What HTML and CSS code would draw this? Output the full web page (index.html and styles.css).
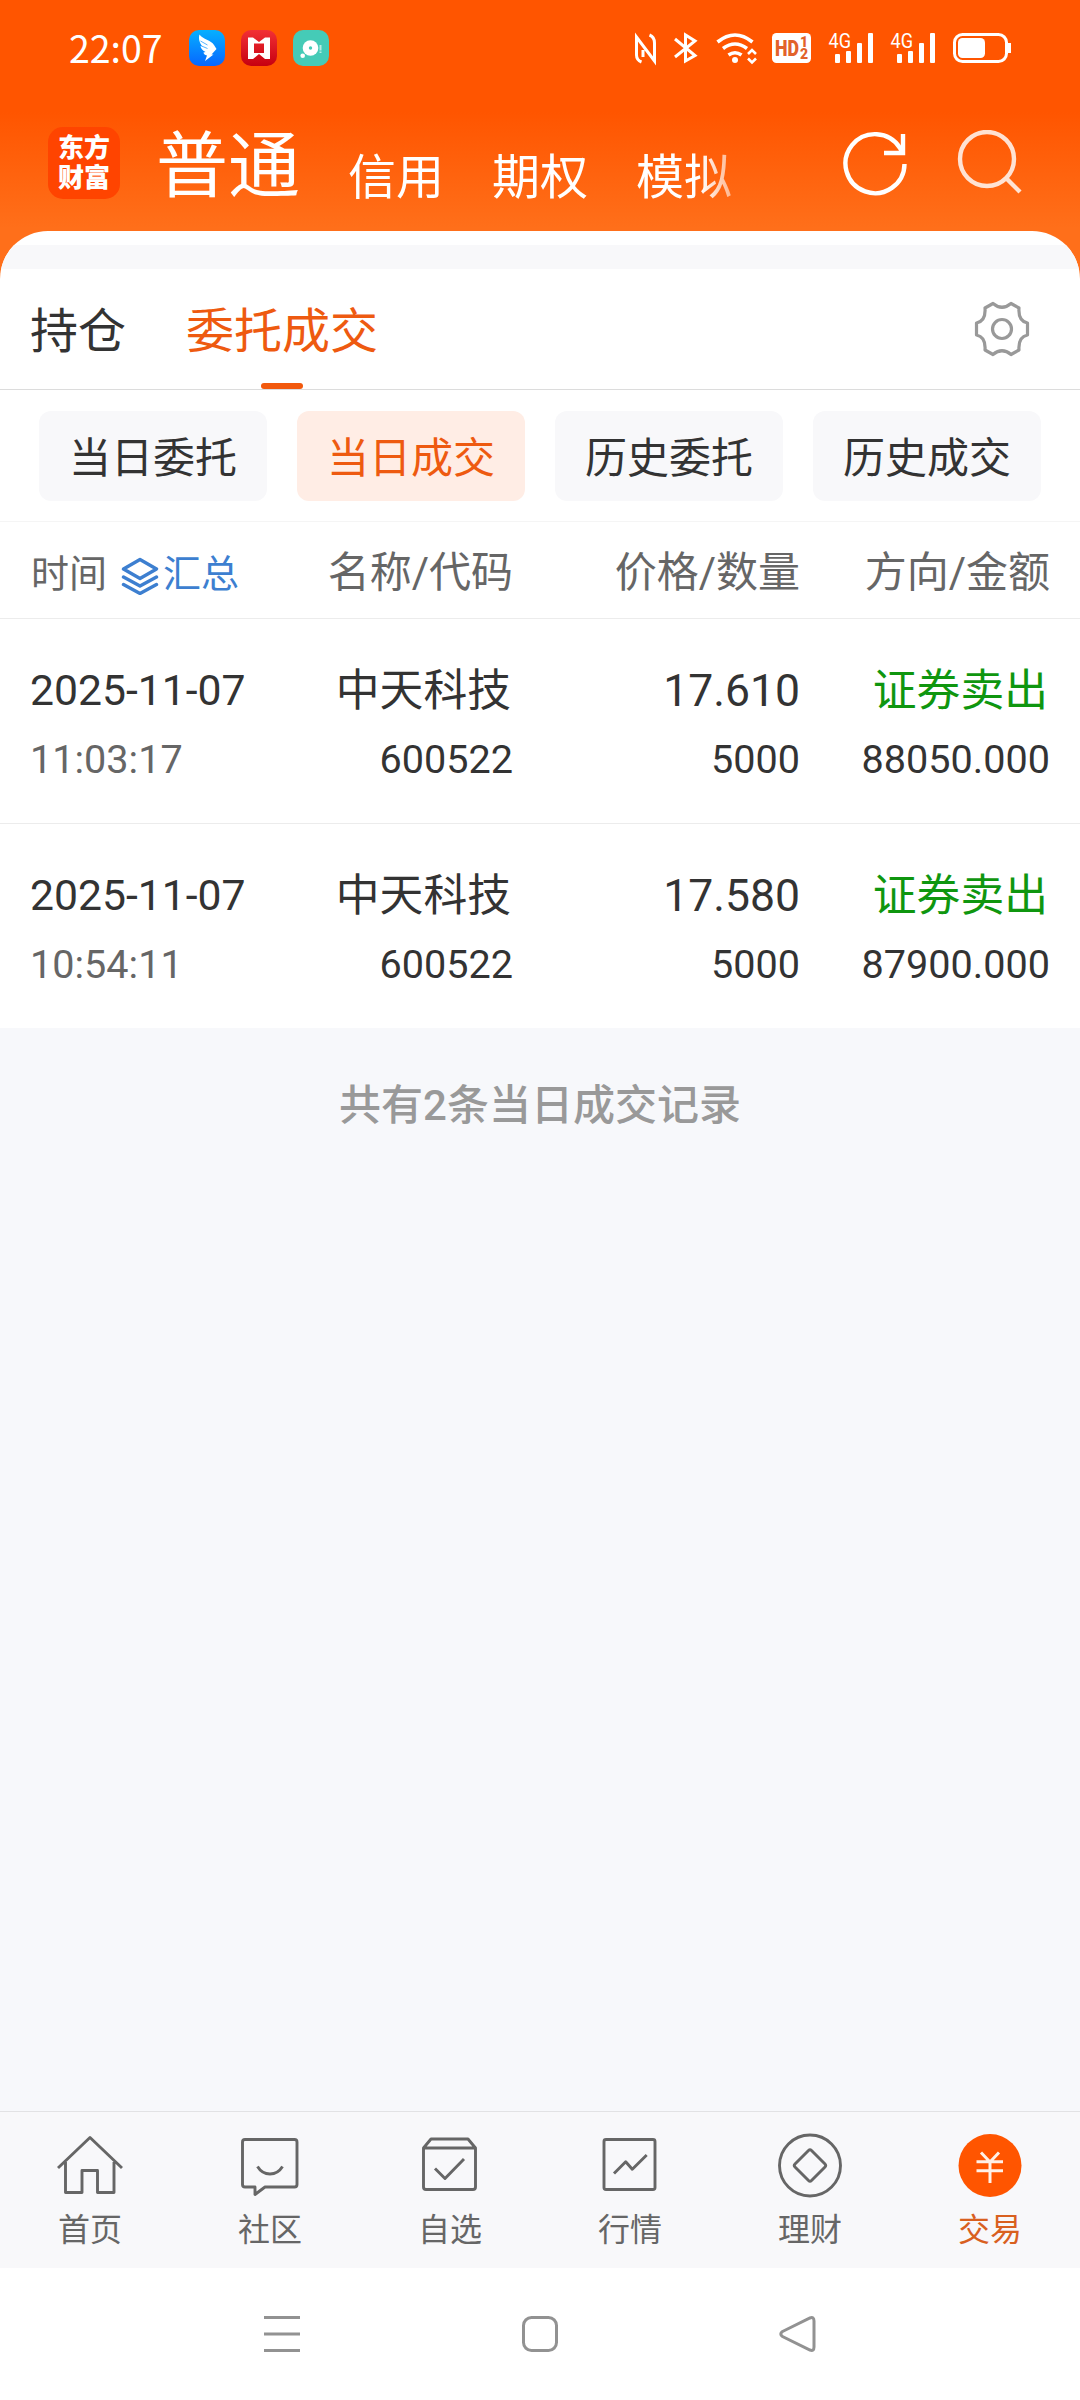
FILE: index.html
```html
<!DOCTYPE html>
<html lang="zh-CN">
<head>
    <meta charset="UTF-8">
    <meta name="viewport" content="width=device-width, initial-scale=1.0">
    <title>当日成交</title>
    <link rel="stylesheet" href="styles.css">
</head>
<body>
    <div class="top">
        <div class="status-bar">
            <span class="clock">22:07</span>
            <div class="notices">
                <svg width="36" height="36" viewBox="0 0 36 36">
                    <defs>
                        <linearGradient id="blue" x1="0" y1="0" x2="0" y2="1"><stop offset="0" stop-color="#06b0ff"/><stop offset="1" stop-color="#0766ff"/></linearGradient>
                        <linearGradient id="red" x1="0" y1="0" x2="0" y2="1"><stop offset="0" stop-color="#f23035"/><stop offset="1" stop-color="#c60010"/></linearGradient>
                    </defs>
                    <rect width="36" height="36" rx="10" fill="url(#blue)"/>
                    <path d="M10.500 4.500C14 9.500 22 10 25 15L27.500 19L22.500 24.500H24.500L16 31L18 25.500C15.500 25 14.500 23.500 14.500 22.500L16.500 22C13.500 20.500 11.500 18 11.500 16L13.500 16.500C10.500 13 9.200 8.500 10.500 4.500Z" fill="#fff"/>
                    <path d="M11.500 11l7 4M12.500 16l6 2.500" stroke="#0b92ff" stroke-width=".7"/>
                </svg>
                <svg width="36" height="36" viewBox="0 0 36 36">
                    <rect width="36" height="36" rx="10" fill="url(#red)"/>
                    <path d="M7 7.500h5l6 4.500 6-4.500h5v21.500h-5l-6-5-6 5H7zM13 13.500v9.500h10V13.500z" fill="#fff" fill-rule="evenodd"/>
                </svg>
                <svg width="36" height="36" viewBox="0 0 36 36">
                    <rect width="36" height="36" rx="10" fill="#45cbb7"/>
                    <circle cx="17.500" cy="18" r="7.800" fill="#fff"/>
                    <circle cx="17.500" cy="18" r="1.700" fill="#45cbb7"/>
                    <circle cx="9.700" cy="25.800" r="2.300" fill="#fff"/>
                    <path d="M27.500 15v5.500M27.500 21.500v1.500" stroke="#b9ece4" stroke-width="2"/>
                </svg>
            </div>
            <svg class="signals" width="380" height="36" viewBox="632 30 380 36" fill="none" stroke="#fff" stroke-width="3">
                <!-- nfc -->
                <path d="M641.500 62q-5-2-5-7V37L654.500 61V43q0-6-5-8M643 57V50"/>
                <!-- bluetooth -->
                <path d="M675 39L695 55.500L685.500 61V35L695 41L675 57"/>
                <!-- wifi -->
                <path d="M717.500 42q17.500-14 35 0M723 48.500q12-9 24 0M728.500 55q6.500-4.500 13 0" stroke-width="3.600"/>
                <circle cx="735" cy="60" r="3" fill="#fff" stroke="none"/>
                <path d="M748 54l4-4 4 4M748 58.500l4 4 4-4" stroke-width="2.600"/>
                <!-- hd -->
                <rect x="772" y="33" width="39" height="30" rx="4.500" fill="#fff" stroke="none"/>
                <g class="badge-text">
                    <text x="775" y="56" font-size="22" textLength="24" lengthAdjust="spacingAndGlyphs">HD</text>
                    <text x="800" y="47" font-size="14">1</text>
                    <text x="800" y="59" font-size="14">2</text>
                </g>
                <!-- mobile signal -->
                <g id="bars" fill="#fff" stroke="none">
                    <text x="828.500" y="48" class="net" textLength="22.500" lengthAdjust="spacingAndGlyphs">4G</text>
                    <rect x="835" y="54" width="5" height="9" rx="1"/>
                    <rect x="846" y="51" width="5" height="12" rx="1"/>
                    <rect x="857" y="43" width="5" height="20" rx="1"/>
                    <rect x="868" y="33" width="5" height="30" rx="1"/>
                </g>
                <use href="#bars" x="62"/>
                <!-- battery -->
                <rect x="954.500" y="34.500" width="52" height="27" rx="8"/>
                <rect x="958" y="38" width="27" height="20" rx="4.500" fill="#fff" stroke="none"/>
                <path d="M1009.500 43v10" stroke-width="3"/>
            </svg>
        </div>
        <div class="app-bar">
            <div class="logo">东方<br>财富</div>
            <div class="accounts">
                <span class="current">普通</span>
                <span>信用</span>
                <span>期权</span>
                <span>模拟</span>
            </div>
            <div class="actions">
                <svg width="66" height="66" viewBox="1 0 66 66" fill="none" stroke="#fff" stroke-width="4.400">
                    <path d="M62.500 34A29.500 29.500 0 1 1 58 18L60 22"/>
                    <path d="M61 4v19H42"/>
                </svg>
                <svg class="search" width="66" height="66" viewBox="1 0 66 66" fill="none" stroke="#fff" stroke-width="4.400">
                    <circle cx="31" cy="29" r="27"/>
                    <path d="M50 48l14 14"/>
                </svg>
            </div>
        </div>
    </div>

    <div class="panel">
        <div class="strip"></div>
        <div class="tabs">
            <span>持仓</span>
            <span class="active">委托成交</span>
            <svg class="gear" width="56" height="56" viewBox="-28 -28 56 56" fill="none" stroke="#999" stroke-width="3.200" stroke-linejoin="round">
                <path d="M-9-25.500Q0-18 9-25.500L17-21Q16-8 25.500-6V6Q16 8 17 21L9 25.500Q0 18-9 25.500L-17 21Q-16 8-25.500 6V-6Q-16-8-17-21Z"/>
                <circle r="9.500"/>
            </svg>
        </div>
        <div class="chips">
            <div class="chip">当日委托</div>
            <div class="chip selected">当日成交</div>
            <div class="chip">历史委托</div>
            <div class="chip">历史成交</div>
        </div>
        <div class="row head">
            <div class="time-head">
                时间
                <svg width="38" height="38" viewBox="0 0 38 38" fill="none" stroke="#3d7fd0" stroke-width="3.400" stroke-linejoin="round" stroke-linecap="round">
                    <path d="M19 2.500L35.500 12L19 21.500L2.500 12ZM2.500 20L19 29L35.500 20M2.500 27.500L19 36.500L35.500 27.500"/>
                </svg>
                <span>汇总</span>
            </div>
            <div>名称/代码</div>
            <div>价格/数量</div>
            <div>方向/金额</div>
        </div>
        <div class="row deal">
            <div><p class="date">2025-11-07</p><p class="time">11:03:17</p></div>
            <div><p class="name">中天科技</p><p>600522</p></div>
            <div><p class="price">17.610</p><p>5000</p></div>
            <div><p class="name sell">证券卖出</p><p>88050.000</p></div>
        </div>
        <div class="row deal">
            <div><p class="date">2025-11-07</p><p class="time">10:54:11</p></div>
            <div><p class="name">中天科技</p><p>600522</p></div>
            <div><p class="price">17.580</p><p>5000</p></div>
            <div><p class="name sell">证券卖出</p><p>87900.000</p></div>
        </div>
    </div>

    <div class="summary">共有2条当日成交记录</div>

    <div class="tab-bar">
        <div class="tab">
            <svg viewBox="0 0 66 66"><path d="M1 36L33 5.500L65 36M8.500 30V60.500H25V38.500H40.500V60.500H57V30"/></svg>
            首页
        </div>
        <div class="tab">
            <svg viewBox="0 0 66 66"><path d="M8 7.500H57.500Q60 7.500 60 10V52.500Q60 55 57.500 55H28L18 62.500V55H8Q5.500 55 5.500 52.500V10Q5.500 7.500 8 7.500ZM20.500 34.500Q25 42 33 42T45.500 34.500"/></svg>
            社区
        </div>
        <div class="tab">
            <svg viewBox="0 0 66 66"><path d="M6.500 16L14 7H51L58.500 16V55Q58.500 57.500 56 57.500H9Q6.500 57.500 6.500 55ZM6.500 16H58.500M18 36.500L28 46.500L47 27"/></svg>
            自选
        </div>
        <div class="tab">
            <svg viewBox="0 0 66 66"><rect x="7" y="7.500" width="51" height="50" rx="2"/><path d="M17 41.500L28.700 29.700L35.300 37.200L49.700 23"/></svg>
            行情
        </div>
        <div class="tab">
            <svg viewBox="0 0 66 66"><circle cx="33" cy="33.500" r="30.500"/><path d="M31.500 18.500Q33 17 34.500 18.500L48 32Q49.500 33.500 48 35L34.500 48.500Q33 50 31.500 48.500L18 35Q16.500 33.500 18 32Z"/></svg>
            理财
        </div>
        <div class="tab on">
            <svg viewBox="0 0 66 66"><circle class="disc" cx="33" cy="33.500" r="31.500"/><path class="yuan" d="M24 20.500L33 30L42 20.500M33 30V51M19.500 29.700H46M19.500 38.700H46"/></svg>
            交易
        </div>
    </div>

    <div class="nav-bar">
        <svg viewBox="0 0 38 38"><path d="M1 2.500H37M1 19H37M1 35.500H37"/></svg>
        <svg viewBox="0 0 38 38"><rect x="2.500" y="2.500" width="33" height="33" rx="8"/></svg>
        <svg viewBox="0 0 38 38"><path d="M3.500 16.500L31 3Q35 1.500 35 6V32Q35 36.500 31 35L3.500 21.500Q0 19 3.500 16.500Z"/></svg>
    </div>
</body>
</html>
```

FILE: styles.css
```css
* {
    margin: 0;
    padding: 0;
    box-sizing: border-box;
}

body {
    width: 1080px;
    height: 2400px;
    display: flex;
    flex-direction: column;
    background: #f7f8fb;
    color: #333;
    font-family: Roboto, "Noto Sans CJK SC", sans-serif;
}

svg {
    display: block;
    flex-shrink: 0;
}

/* header */
.top {
    height: 291px;
    flex-shrink: 0;
    background: linear-gradient(#ff5500 112px, #ff6f1a 228px);
    color: #fff;
}

.status-bar {
    height: 96px;
    padding: 0 68px 0 69px;
    display: flex;
    align-items: center;
}

.clock {
    width: 120px;
    font-family: "Noto Sans CJK SC", sans-serif;
    font-size: 37.5px;
    line-height: 48px;
    padding-bottom: 3px;
}

.notices {
    display: flex;
    gap: 16px;
}

.signals {
    margin-left: auto;
}

.badge-text {
    fill: #e2622a;
    stroke: none;
    font-weight: 900;
}

.net {
    font-size: 20px;
}

.app-bar {
    height: 135px;
    padding: 0 57px 0 48px;
    display: flex;
    align-items: center;
}

.logo {
    width: 72px;
    height: 72px;
    padding-top: 6px;
    border-radius: 15px;
    background: #ff4400;
    font-size: 26px;
    line-height: 30px;
    font-weight: 900;
    text-align: center;
    margin-bottom: 1px;
}

.accounts {
    margin-left: 36px;
    display: flex;
    align-items: flex-end;
    gap: 48px;
    font-size: 48px;
    line-height: 68px;
    padding-top: 6px;
    -webkit-mask-image: linear-gradient(to right, #000 544px, rgba(0, 0, 0, 0.45) 580px);
    mask-image: linear-gradient(to right, #000 544px, rgba(0, 0, 0, 0.45) 580px);
}

.accounts .current {
    font-size: 72px;
    line-height: 90px;
}

.actions {
    margin-left: auto;
    margin-bottom: 2px;
    display: flex;
    gap: 48px;
}

.search {
    opacity: 0.82;
}

/* content panel */
.panel {
    margin-top: -60px;
    padding-top: 14px;
    border-radius: 48px 48px 0 0;
    overflow: hidden;
    flex-shrink: 0;
    background: #fff;
}

.strip {
    height: 24px;
    background: #f8f8fa;
}

.tabs {
    height: 121px;
    padding: 0 50px 0 30px;
    display: flex;
    align-items: center;
    gap: 60px;
    border-bottom: 1px solid #dcdcdc;
    font-size: 48px;
}

.tabs span {
    height: 120px;
    line-height: 126px;
}

.tabs .active {
    position: relative;
    color: #ee5a10;
}

.tabs .active::after {
    content: '';
    position: absolute;
    left: 75px;
    bottom: 0;
    width: 42px;
    height: 6px;
    border-radius: 3px;
    background: #f2590d;
}

.gear {
    margin-left: auto;
}

.chips {
    height: 132px;
    padding: 21px 39px 0;
    display: flex;
    gap: 30px;
    border-bottom: 1px solid #f5f5f5;
}

.chip {
    flex: 1;
    height: 90px;
    border-radius: 12px;
    background: #f8f8fa;
    font-size: 42px;
    line-height: 95px;
    text-align: center;
}

.chip.selected {
    background: #ffede5;
    color: #ee5a10;
}

/* deals table */
.row {
    padding: 0 30px;
    display: grid;
    grid-template-columns: 260px 223px 287px 250px;
    text-align: right;
    border-bottom: 1px solid #ececec;
}

.head {
    height: 97px;
    font-size: 42px;
    line-height: 101px;
    color: #666;
}

.time-head {
    display: flex;
    align-items: center;
    padding-left: 1px;
    font-size: 38px;
    line-height: 105px;
}

.time-head svg {
    margin: 3px 4px 0 14px;
}

.time-head span {
    color: #3d7fd0;
}

.deal {
    height: 205px;
    padding-top: 42px;
}

.deal:last-child {
    height: 204px;
    border-bottom: none;
}

.deal > :first-child {
    text-align: left;
}

.deal p {
    height: 60px;
    line-height: 60px;
}

.deal p.date {
    font-size: 42.7px;
    line-height: 58px;
}

.deal p.name {
    padding-right: 2px;
    font-size: 43.8px;
}

.deal p.price {
    font-size: 44.5px;
}

.deal p + p {
    height: 50px;
    margin-top: 14px;
    font-size: 39.6px;
    line-height: 50px;
}

.deal p.time {
    color: #666;
}

.deal p.sell {
    color: #0f960f;
}

.summary {
    flex: 1;
    padding-top: 48px;
    font-size: 42px;
    line-height: 60px;
    font-weight: 500;
    text-align: center;
    color: #999;
}

/* bottom tabs */
.tab-bar {
    height: 157px;
    padding-top: 20px;
    flex-shrink: 0;
    display: flex;
    border-top: 1px solid #e2e2e4;
    background: #f8f8fa;
}

.tab {
    flex: 1;
    display: flex;
    flex-direction: column;
    align-items: center;
    gap: 12px;
    font-size: 32px;
    line-height: 40px;
    color: #666;
}

.tab svg {
    width: 66px;
    height: 66px;
    fill: none;
    stroke: #666;
    stroke-width: 2.9;
    stroke-linejoin: round;
}

.tab.on {
    color: #d9601f;
}

.tab .disc {
    fill: #ff5500;
    stroke: none;
}

.tab .yuan {
    stroke: #fff0e6;
    stroke-width: 3;
}

/* system navigation */
.nav-bar {
    height: 132px;
    flex-shrink: 0;
    display: flex;
    justify-content: center;
    align-items: center;
    gap: 220px;
    background: #fff;
}

.nav-bar svg {
    width: 38px;
    height: 38px;
    fill: none;
    stroke: #929292;
    stroke-width: 3;
}
```
